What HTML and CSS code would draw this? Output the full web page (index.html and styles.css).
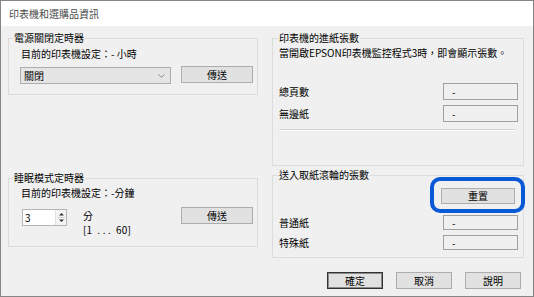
FILE: index.html
```html
<!DOCTYPE html>
<html lang="zh-Hant">
<head>
  <meta charset="UTF-8" />
  <meta name="viewport" content="width=device-width, initial-scale=1.0" />
  <title>印表機和選購品資訊</title>
  <link rel="stylesheet" href="styles.css">
</head>
<body>
  <div class="window">
    <div class="titlebar">印表機和選購品資訊</div>

    <div class="content">
      <div class="columns">
        <div class="col">
          <fieldset class="group group-power">
            <legend>電源關閉定時器</legend>
            <div class="group-body left-body">
              <div class="line">目前的印表機設定：- 小時</div>
              <div class="action-row">
                <div class="combo">
                  <span>關閉</span>
                  <svg width="7" height="4" viewBox="0 0 7 4"><path d="M0.5 0.5 L3.5 3.3 L6.5 0.5" fill="none" stroke="#8a8a8a" stroke-width="1"/></svg>
                </div>
                <button class="btn">傳送</button>
              </div>
            </div>
          </fieldset>

          <fieldset class="group group-sleep">
            <legend>睡眠模式定時器</legend>
            <div class="group-body left-body">
              <div class="line short">目前的印表機設定：-分鐘</div>
              <div class="action-row sleep-row">
                <div class="spin-wrap">
                  <div class="spin">
                    <span class="spin-val">3</span>
                    <span class="spin-btns">
                      <svg width="9" height="15" viewBox="0 0 9 15">
                        <path d="M2 5.5 L4.5 3 L7 5.5 Z" fill="#333"/>
                        <line x1="1" y1="7.5" x2="8" y2="7.5" stroke="#cfcfcf"/>
                        <path d="M2 9.5 L4.5 12 L7 9.5 Z" fill="#333"/>
                      </svg>
                    </span>
                  </div>
                  <div class="spin-labels">
                    <div>分</div>
                    <div class="range">[1 &nbsp;. . . &nbsp;60]</div>
                  </div>
                </div>
                <button class="btn">傳送</button>
              </div>
            </div>
          </fieldset>
        </div>

        <div class="col">
          <fieldset class="group group-feed">
            <legend>印表機的進紙張數</legend>
            <div class="group-body right-body">
              <div class="line tight">當開啟EPSON印表機監控程式3時，即會顯示張數。</div>
              <div class="count-row first">
                <span>總頁數</span>
                <span class="count-box">-</span>
              </div>
              <div class="count-row">
                <span>無邊紙</span>
                <span class="count-box">-</span>
              </div>
              <div class="separator"></div>
            </div>
          </fieldset>

          <fieldset class="group group-roller">
            <legend>送入取紙滾輪的張數</legend>
            <div class="group-body right-body">
              <div class="reset-row">
                <div class="reset-wrap">
                  <button class="btn reset-btn">重置</button>
                  <span class="highlight"></span>
                </div>
              </div>
              <div class="count-row small first-small">
                <span>普通紙</span>
                <span class="count-box">-</span>
              </div>
              <div class="count-row small">
                <span>特殊紙</span>
                <span class="count-box">-</span>
              </div>
            </div>
          </fieldset>
        </div>
      </div>

      <div class="footer">
        <button class="btn footer-btn default">確定</button>
        <button class="btn footer-btn">取消</button>
        <button class="btn footer-btn">說明</button>
      </div>
    </div>
  </div>
</body>
</html>
```

FILE: styles.css
```css
html, body {
  margin: 0;
}

body {
  width: 534px;
  height: 297px;
  font-family: "Noto Sans CJK TC", "Noto Sans", sans-serif;
  font-size: 10px;
  color: #000;
  background: #f0f0f0;
  overflow: hidden;
}

.window {
  box-sizing: border-box;
  width: 534px;
  height: 297px;
  border: 1px solid #858585;
  display: flex;
  flex-direction: column;
}

.titlebar {
  height: 25px;
  line-height: 25px;
  background: #fff;
  padding-left: 8px;
  color: #4a4a4a;
}

.content {
  flex: 1;
  background: #f0f0f0;
  padding: 4px 9px 0 7px;
}

.columns {
  display: grid;
  grid-template-columns: 250px 252px;
  column-gap: 14px;
  align-items: start;
}

.col {
  display: flex;
  flex-direction: column;
}

.group {
  box-sizing: border-box;
  margin: 0;
  padding: 0;
  min-width: 0;
  border: 1px solid #dcdcdc;
}

.group legend {
  padding: 0 1px;
  margin-left: 4px;
  line-height: 16px;
}

.group-feed legend,
.group-roller legend {
  margin-left: 5px;
}

.group-power {
  height: 65px;
}

.group-sleep {
  height: 77px;
  margin-top: 75px;
}

.group-feed {
  height: 136px;
}

.group-roller {
  height: 91px;
  margin-top: 1px;
}

.left-body {
  padding-left: 12px;
}

.right-body {
  padding: 0 5px 0 6px;
}

.line {
  line-height: 16px;
}

.line.short {
  line-height: 14px;
}

.line.tight {
  line-height: 13px;
}

/* combo + send button rows */
.action-row {
  display: grid;
  grid-template-columns: 150px 72px;
  column-gap: 10px;
  align-items: start;
  margin-top: 4px;
}

.sleep-row {
  margin-top: 7px;
}

.combo {
  box-sizing: border-box;
  width: 151px;
  height: 17px;
  margin: 1px 0 0 -1px;
  padding: 0 5px 0 3px;
  border: 1px solid #adadad;
  background: #e5e5e5;
  display: flex;
  align-items: center;
  justify-content: space-between;
}

.btn {
  box-sizing: border-box;
  width: 72px;
  height: 17px;
  padding: 0;
  border: 1px solid #adadad;
  background: #e1e1e1;
  color: #000;
  font-family: inherit;
  font-size: 10px;
  line-height: 15px;
}

/* spin box */
.spin-wrap {
  display: flex;
  align-items: flex-start;
  margin-top: 2px;
  margin-left: 1px;
}

.spin {
  box-sizing: border-box;
  width: 45px;
  height: 17px;
  border: 1px solid #b4b4b4;
  background: #fff;
  display: flex;
}

.spin-val {
  flex: 1;
  padding-left: 2px;
  line-height: 15px;
}

.spin-btns {
  width: 10px;
  border-left: 1px solid #e0e0e0;
  background: #f4f4f4;
  display: flex;
  justify-content: center;
}

.spin-labels {
  margin-left: 16px;
  line-height: 14px;
}

.range {
  letter-spacing: 0.2px;
}

/* counters */
.count-row {
  display: flex;
  justify-content: space-between;
  align-items: center;
  margin-top: 5px;
}

.count-row.first {
  margin-top: 24px;
}

.count-box {
  box-sizing: border-box;
  width: 75px;
  height: 17px;
  padding-left: 8px;
  border: 1px solid #a0a0a0;
  background: #f0f0f0;
  line-height: 15px;
}

.count-row.small .count-box {
  height: 15px;
  line-height: 13px;
}

.count-row.first-small {
  margin-top: 11px;
}

.separator {
  height: 0;
  margin: 7px 3px 0 0;
  border-top: 1px solid #d4d4d4;
  border-bottom: 1px solid #fff;
}

.reset-row {
  display: flex;
  justify-content: flex-end;
  padding-right: 3px;
  margin-top: 5px;
}

.reset-wrap {
  position: relative;
}

.reset-btn {
  width: 74px;
  height: 16px;
  line-height: 14px;
}

.highlight {
  position: absolute;
  left: -11px;
  right: -10px;
  top: -11px;
  bottom: -9px;
  border: 4px solid #0a5ad8;
  border-radius: 10px;
}

/* bottom buttons */
.footer {
  display: flex;
  justify-content: flex-end;
  gap: 13px;
  margin-top: 14px;
  padding-right: 3px;
}

.footer-btn {
  width: 56px;
}

.footer-btn.default {
  border: 1px solid #333;
  box-shadow: inset 0 0 0 1px #8a8a8a;
}
```
